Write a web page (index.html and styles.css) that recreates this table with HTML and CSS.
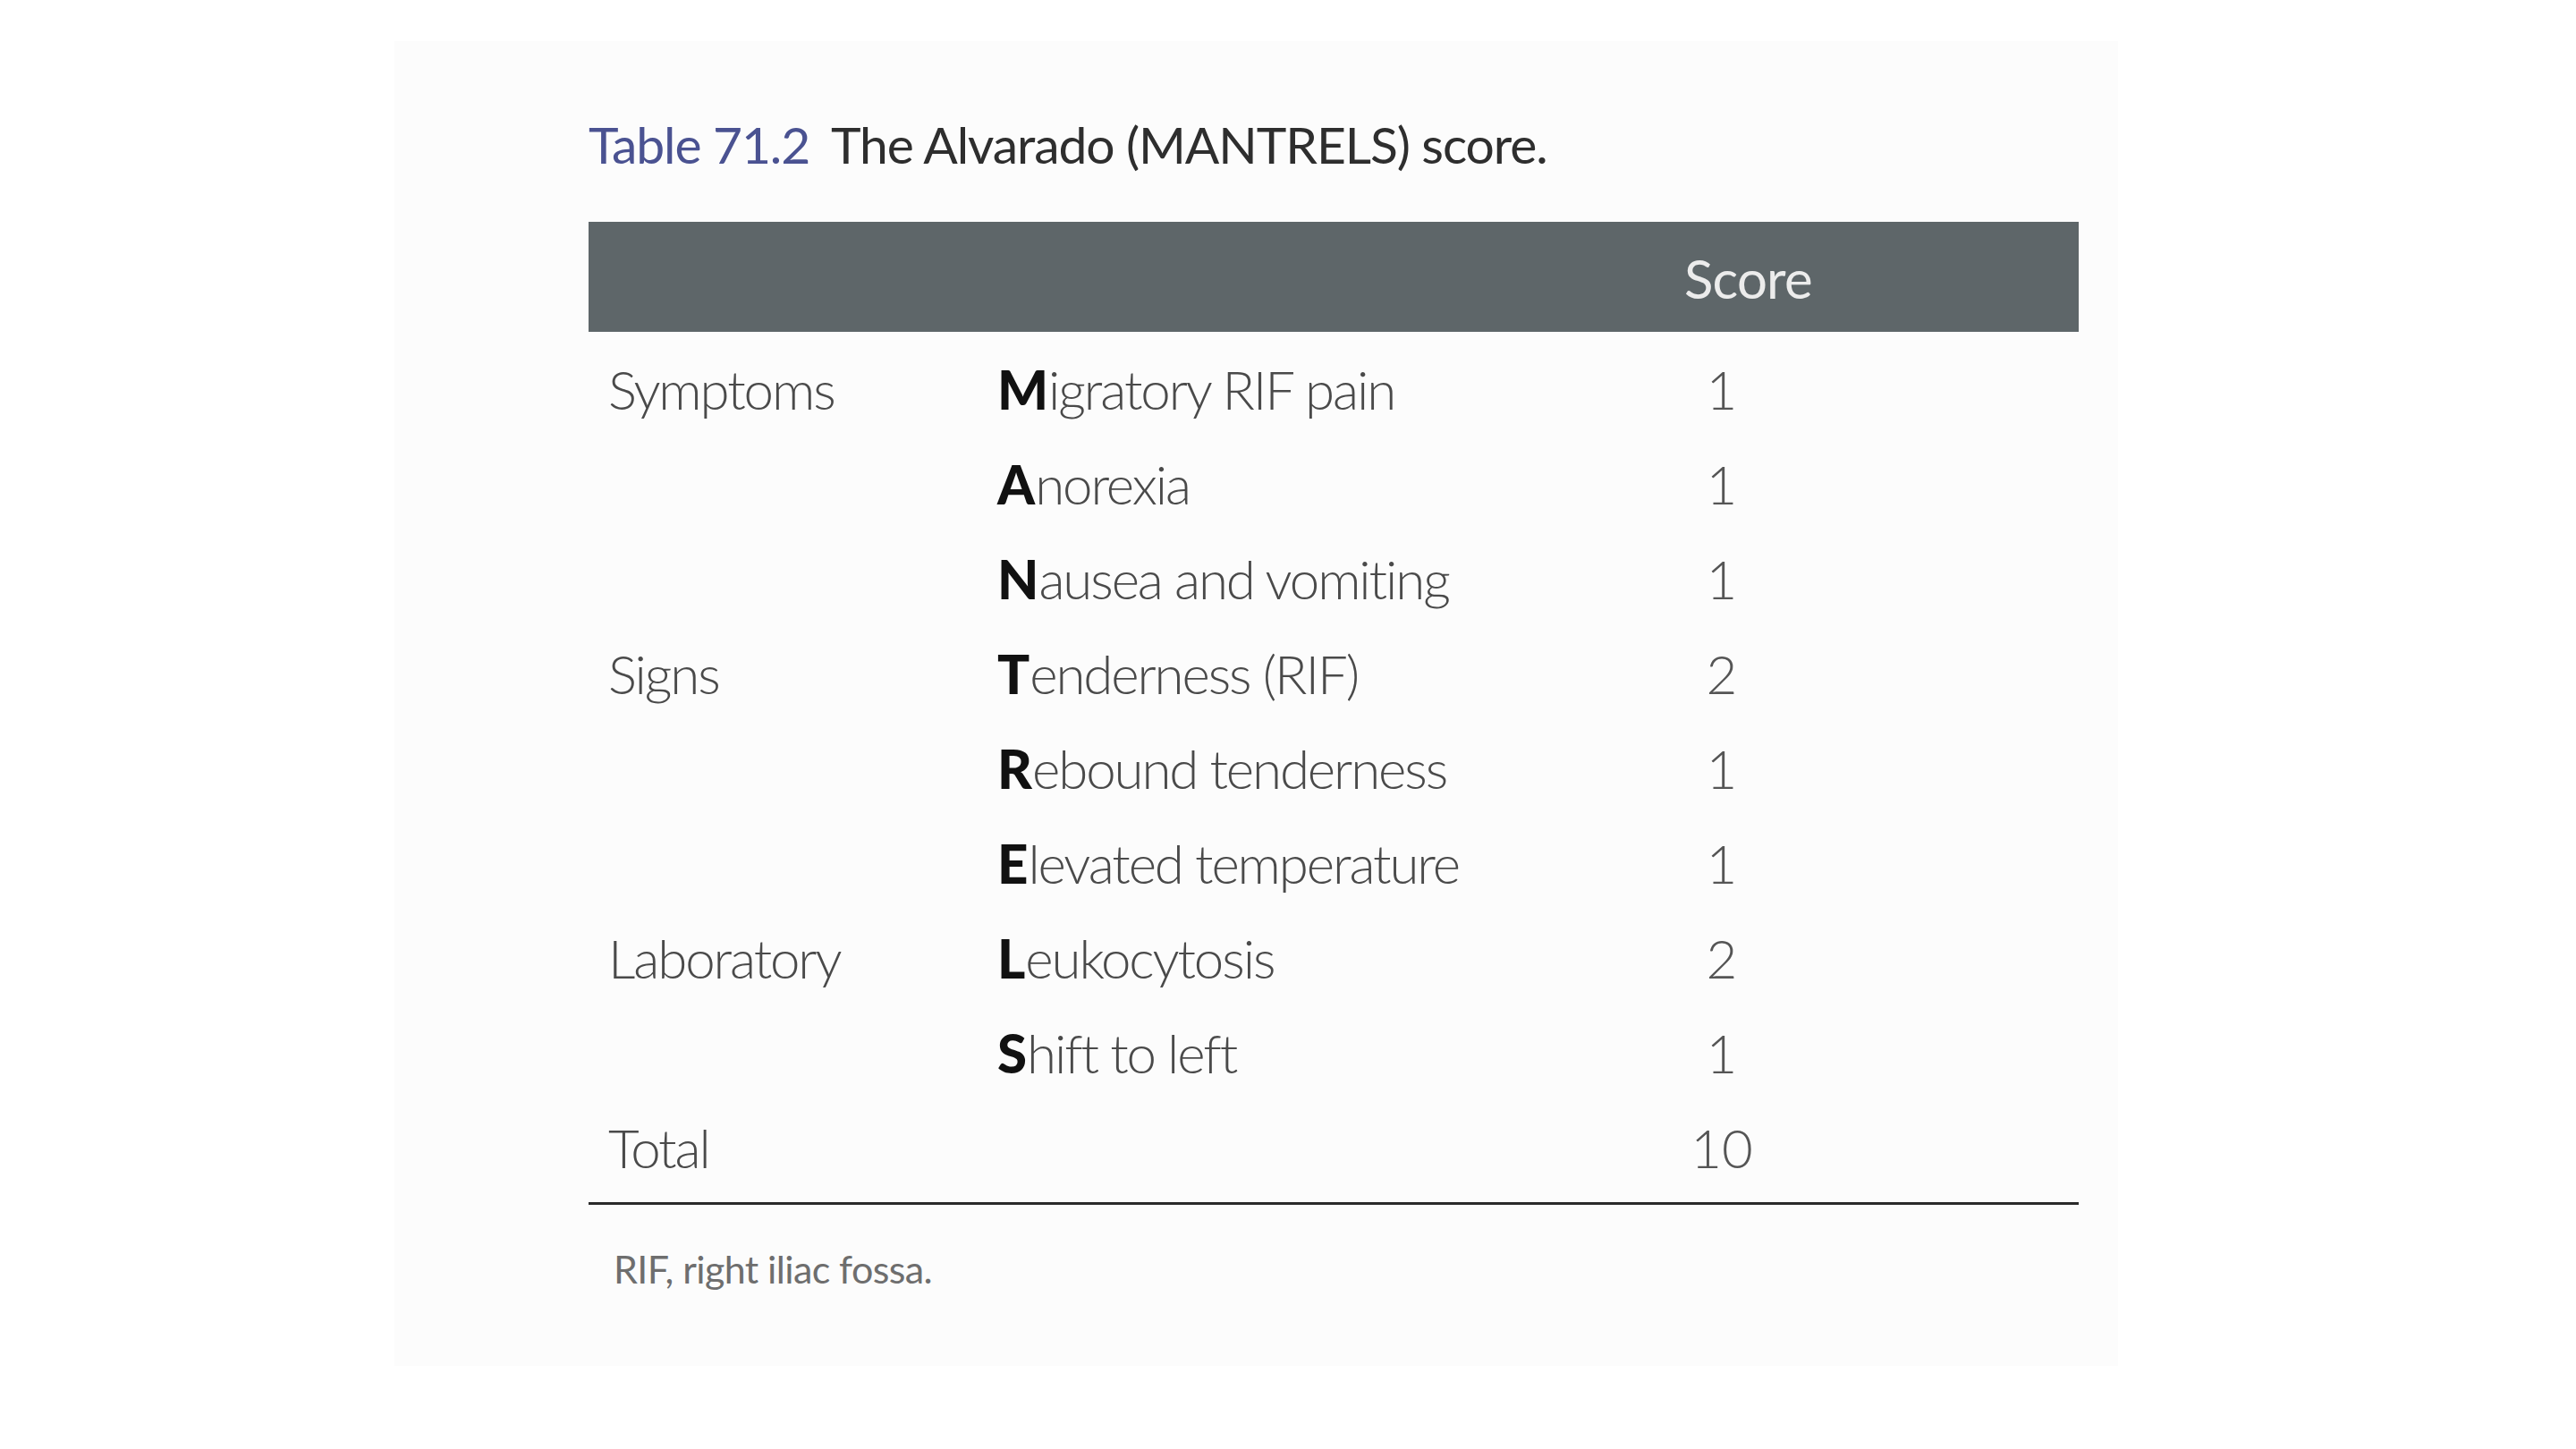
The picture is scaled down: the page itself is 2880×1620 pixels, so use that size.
FILE: index.html
```html
<!DOCTYPE html>
<html lang="en">
<head>
<meta charset="utf-8">
<title>Table 71.2 The Alvarado (MANTRELS) score</title>
<link rel="stylesheet" href="styles.css">
</head>
<body>
<div class="page">
  <div class="panel">
    <h1 class="caption"><span class="label">Table 71.2</span> The Alvarado (MANTRELS) score.</h1>
    <div class="table">
      <div class="head">
        <div class="cell c1"></div>
        <div class="cell c2"></div>
        <div class="cell c3 head-score">Score</div>
      </div>
      <div class="row">
        <div class="cell c1">Symptoms</div>
        <div class="cell c2"><b>M</b>igratory RIF pain</div>
        <div class="cell c3 num">1</div>
      </div>
      <div class="row">
        <div class="cell c1"></div>
        <div class="cell c2"><b>A</b>norexia</div>
        <div class="cell c3 num">1</div>
      </div>
      <div class="row">
        <div class="cell c1"></div>
        <div class="cell c2"><b>N</b>ausea and vomiting</div>
        <div class="cell c3 num">1</div>
      </div>
      <div class="row">
        <div class="cell c1">Signs</div>
        <div class="cell c2"><b>T</b>enderness (RIF)</div>
        <div class="cell c3 num">2</div>
      </div>
      <div class="row">
        <div class="cell c1"></div>
        <div class="cell c2"><b>R</b>ebound tenderness</div>
        <div class="cell c3 num">1</div>
      </div>
      <div class="row">
        <div class="cell c1"></div>
        <div class="cell c2"><b>E</b>levated temperature</div>
        <div class="cell c3 num">1</div>
      </div>
      <div class="row">
        <div class="cell c1">Laboratory</div>
        <div class="cell c2"><b>L</b>eukocytosis</div>
        <div class="cell c3 num">2</div>
      </div>
      <div class="row">
        <div class="cell c1"></div>
        <div class="cell c2"><b>S</b>hift to left</div>
        <div class="cell c3 num">1</div>
      </div>
      <div class="row total">
        <div class="cell c1">Total</div>
        <div class="cell c2"></div>
        <div class="cell c3 num">10</div>
      </div>
    </div>
    <p class="footnote">RIF, right iliac fossa.</p>
  </div>
</div>
</body>
</html>
```

FILE: styles.css
```css
html, body {
  margin: 0;
  padding: 0;
  background: #ffffff;
}

body {
  font-family: "Lato", "Open Sans", "DejaVu Sans", sans-serif;
}

.page {
  padding: 46px 0 0 441px;
}

.panel {
  width: 1927px;
  height: 1481px;
  box-sizing: border-box;
  background: #fcfcfc;
  padding: 81px 0 0 217px;
}

.caption {
  margin: 0;
  font-size: 57px;
  font-weight: 400;
  line-height: 1.2;
  letter-spacing: -1.1px;
  color: #2e2e2e;
  white-space: nowrap;
}

.caption .label {
  color: #4a5291;
  margin-right: 12px;
}

.table {
  width: 1666px;
  margin-top: 53px;
}

.head,
.row {
  display: grid;
  grid-template-columns: 457px 768px 441px;
}

.head {
  height: 123px;
  background: #5e6669;
  align-items: center;
  margin-bottom: 11px;
}

.head-score {
  color: #ececec;
  font-size: 60px;
  font-weight: 400;
  line-height: 1;
  letter-spacing: -0.8px;
  padding-top: 2px;
}

.row {
  height: 106px;
  font-size: 60px;
  font-weight: 300;
  line-height: 106px;
  letter-spacing: -2.1px;
  color: #4a4a4a;
}

.row .c1 {
  padding-left: 22px;
}

.row .c2 b {
  font-weight: 900;
  color: #111111;
  letter-spacing: 0;
}

.row .num {
  width: 84px;
  text-align: center;
  letter-spacing: 0;
  color: #555555;
}

.row.total {
  padding-bottom: 8px;
  border-bottom: 3px solid #2a2a2a;
}

.footnote {
  margin: 46px 0 0 28px;
  font-size: 43px;
  font-weight: 400;
  line-height: 1.2;
  letter-spacing: -0.6px;
  color: #6e6e6e;
}
```
